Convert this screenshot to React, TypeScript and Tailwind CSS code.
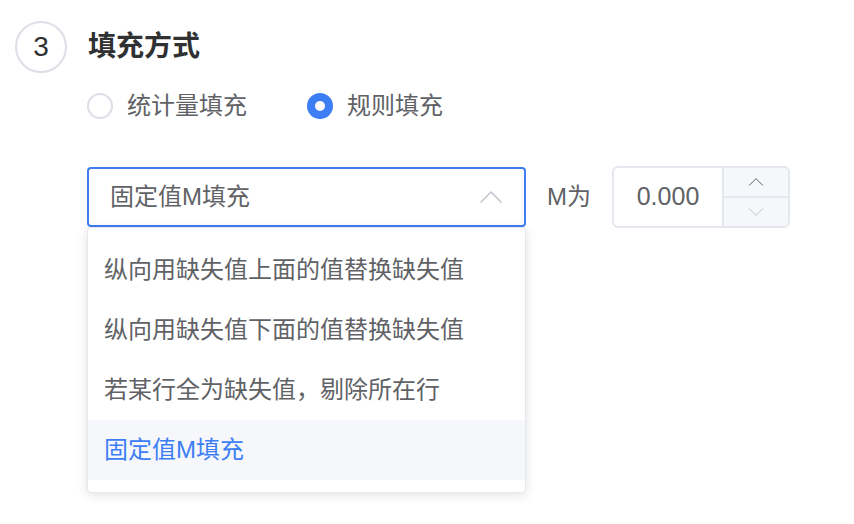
import React from "react";

// ─── Data ────────────────────────────────────────────────────────────────────

const OPTIONS = [
  "纵向用缺失值上面的值替换缺失值",
  "纵向用缺失值下面的值替换缺失值",
  "若某行全为缺失值，剔除所在行",
  "固定值M填充",
];

// ─── Icons ───────────────────────────────────────────────────────────────────

function Chevron({ up, className }: { up?: boolean; className?: string }) {
  return (
    <svg viewBox="0 0 22 12" className={className} fill="none">
      <polyline
        points={up ? "1,11 11,1 21,11" : "1,1 11,11 21,1"}
        stroke="currentColor"
        strokeWidth="1.5"
        strokeLinejoin="round"
        strokeLinecap="round"
      />
    </svg>
  );
}

// ─── Sub-components ──────────────────────────────────────────────────────────

function Radio({ label, checked }: { label: string; checked?: boolean }) {
  return (
    <label className="flex items-center gap-[14px]">
      {checked ? (
        <span className="flex h-[26px] w-[26px] items-center justify-center rounded-full bg-[#3d7ef4]">
          <span className="h-[10px] w-[10px] rounded-full bg-white" />
        </span>
      ) : (
        <span className="h-[26px] w-[26px] rounded-full border-2 border-[#dcdfe6] bg-white" />
      )}
      <span className="text-[24px] leading-none text-[#606266]">{label}</span>
    </label>
  );
}

function NumberInput({ value }: { value: string }) {
  return (
    <div className="flex h-[62px] w-[178px] overflow-hidden rounded-[6px] border-2 border-[#e4e7ed]">
      <div className="flex flex-1 items-center justify-center text-[25px] text-[#606266]">
        {value}
      </div>
      <div className="flex w-[66px] flex-col border-l-2 border-[#e4e7ed] bg-[#f5f7fa]">
        <button type="button" className="flex flex-1 items-center justify-center border-b-2 border-[#e4e7ed] text-[#606266]">
          <Chevron up className="h-[8px] w-[16px]" />
        </button>
        <button type="button" className="flex flex-1 items-center justify-center text-[#c0c4cc]">
          <Chevron className="h-[8px] w-[16px]" />
        </button>
      </div>
    </div>
  );
}

// ─── Main component ──────────────────────────────────────────────────────────

export default function App() {
  const selected = "固定值M填充";

  return (
    <div className="h-[524px] w-[854px] overflow-hidden bg-white font-['Liberation_Sans','Noto_Sans_CJK_SC',sans-serif]">
      {/* ── Step header ─────────────────────────────────────────────────── */}
      <div className="flex items-center pl-[15px] pt-[21px]">
        <div className="flex h-[52px] w-[52px] items-center justify-center rounded-full border-2 border-[#dcdfe6] text-[28px] text-[#303133]">
          3
        </div>
        <h2 className="ml-[21px] text-[28px] font-bold leading-none text-[#303133]">填充方式</h2>
      </div>

      <div className="pl-[87px]">
        {/* ── Radio group ─────────────────────────────────────────────── */}
        <div className="mt-[20px] flex items-center gap-[60px]">
          <Radio label="统计量填充" />
          <Radio label="规则填充" checked />
        </div>

        {/* ── Select + M value ────────────────────────────────────────── */}
        <div className="mt-[47px] flex items-center">
          <div className="relative w-[439px]">
            <div className="flex h-[60px] items-center justify-between rounded-[4px] border-2 border-[#3d7ef4] pl-[21px] pr-[22px]">
              <span className="text-[24px] text-[#606266]">{selected}</span>
              <Chevron up className="h-[12px] w-[22px] text-[#c0c4cc]" />
            </div>

            {/* Dropdown */}
            <div className="absolute left-0 top-[60px] w-full rounded-[4px] border border-[#e4e7ed] bg-white py-[12px] shadow-[0_2px_12px_rgba(0,0,0,0.12)]">
              {OPTIONS.map((opt) => (
                <div
                  key={opt}
                  className={[
                    "flex h-[60px] items-center pl-[16px] text-[24px]",
                    opt === selected ? "bg-[#f5f7fa] text-[#3d7ef4]" : "text-[#606266]",
                  ].join(" ")}
                >
                  {opt}
                </div>
              ))}
            </div>
          </div>

          <span className="ml-[21px] text-[24px] text-[#606266]">M为</span>
          <div className="ml-[21px]">
            <NumberInput value="0.000" />
          </div>
        </div>
      </div>
    </div>
  );
}
